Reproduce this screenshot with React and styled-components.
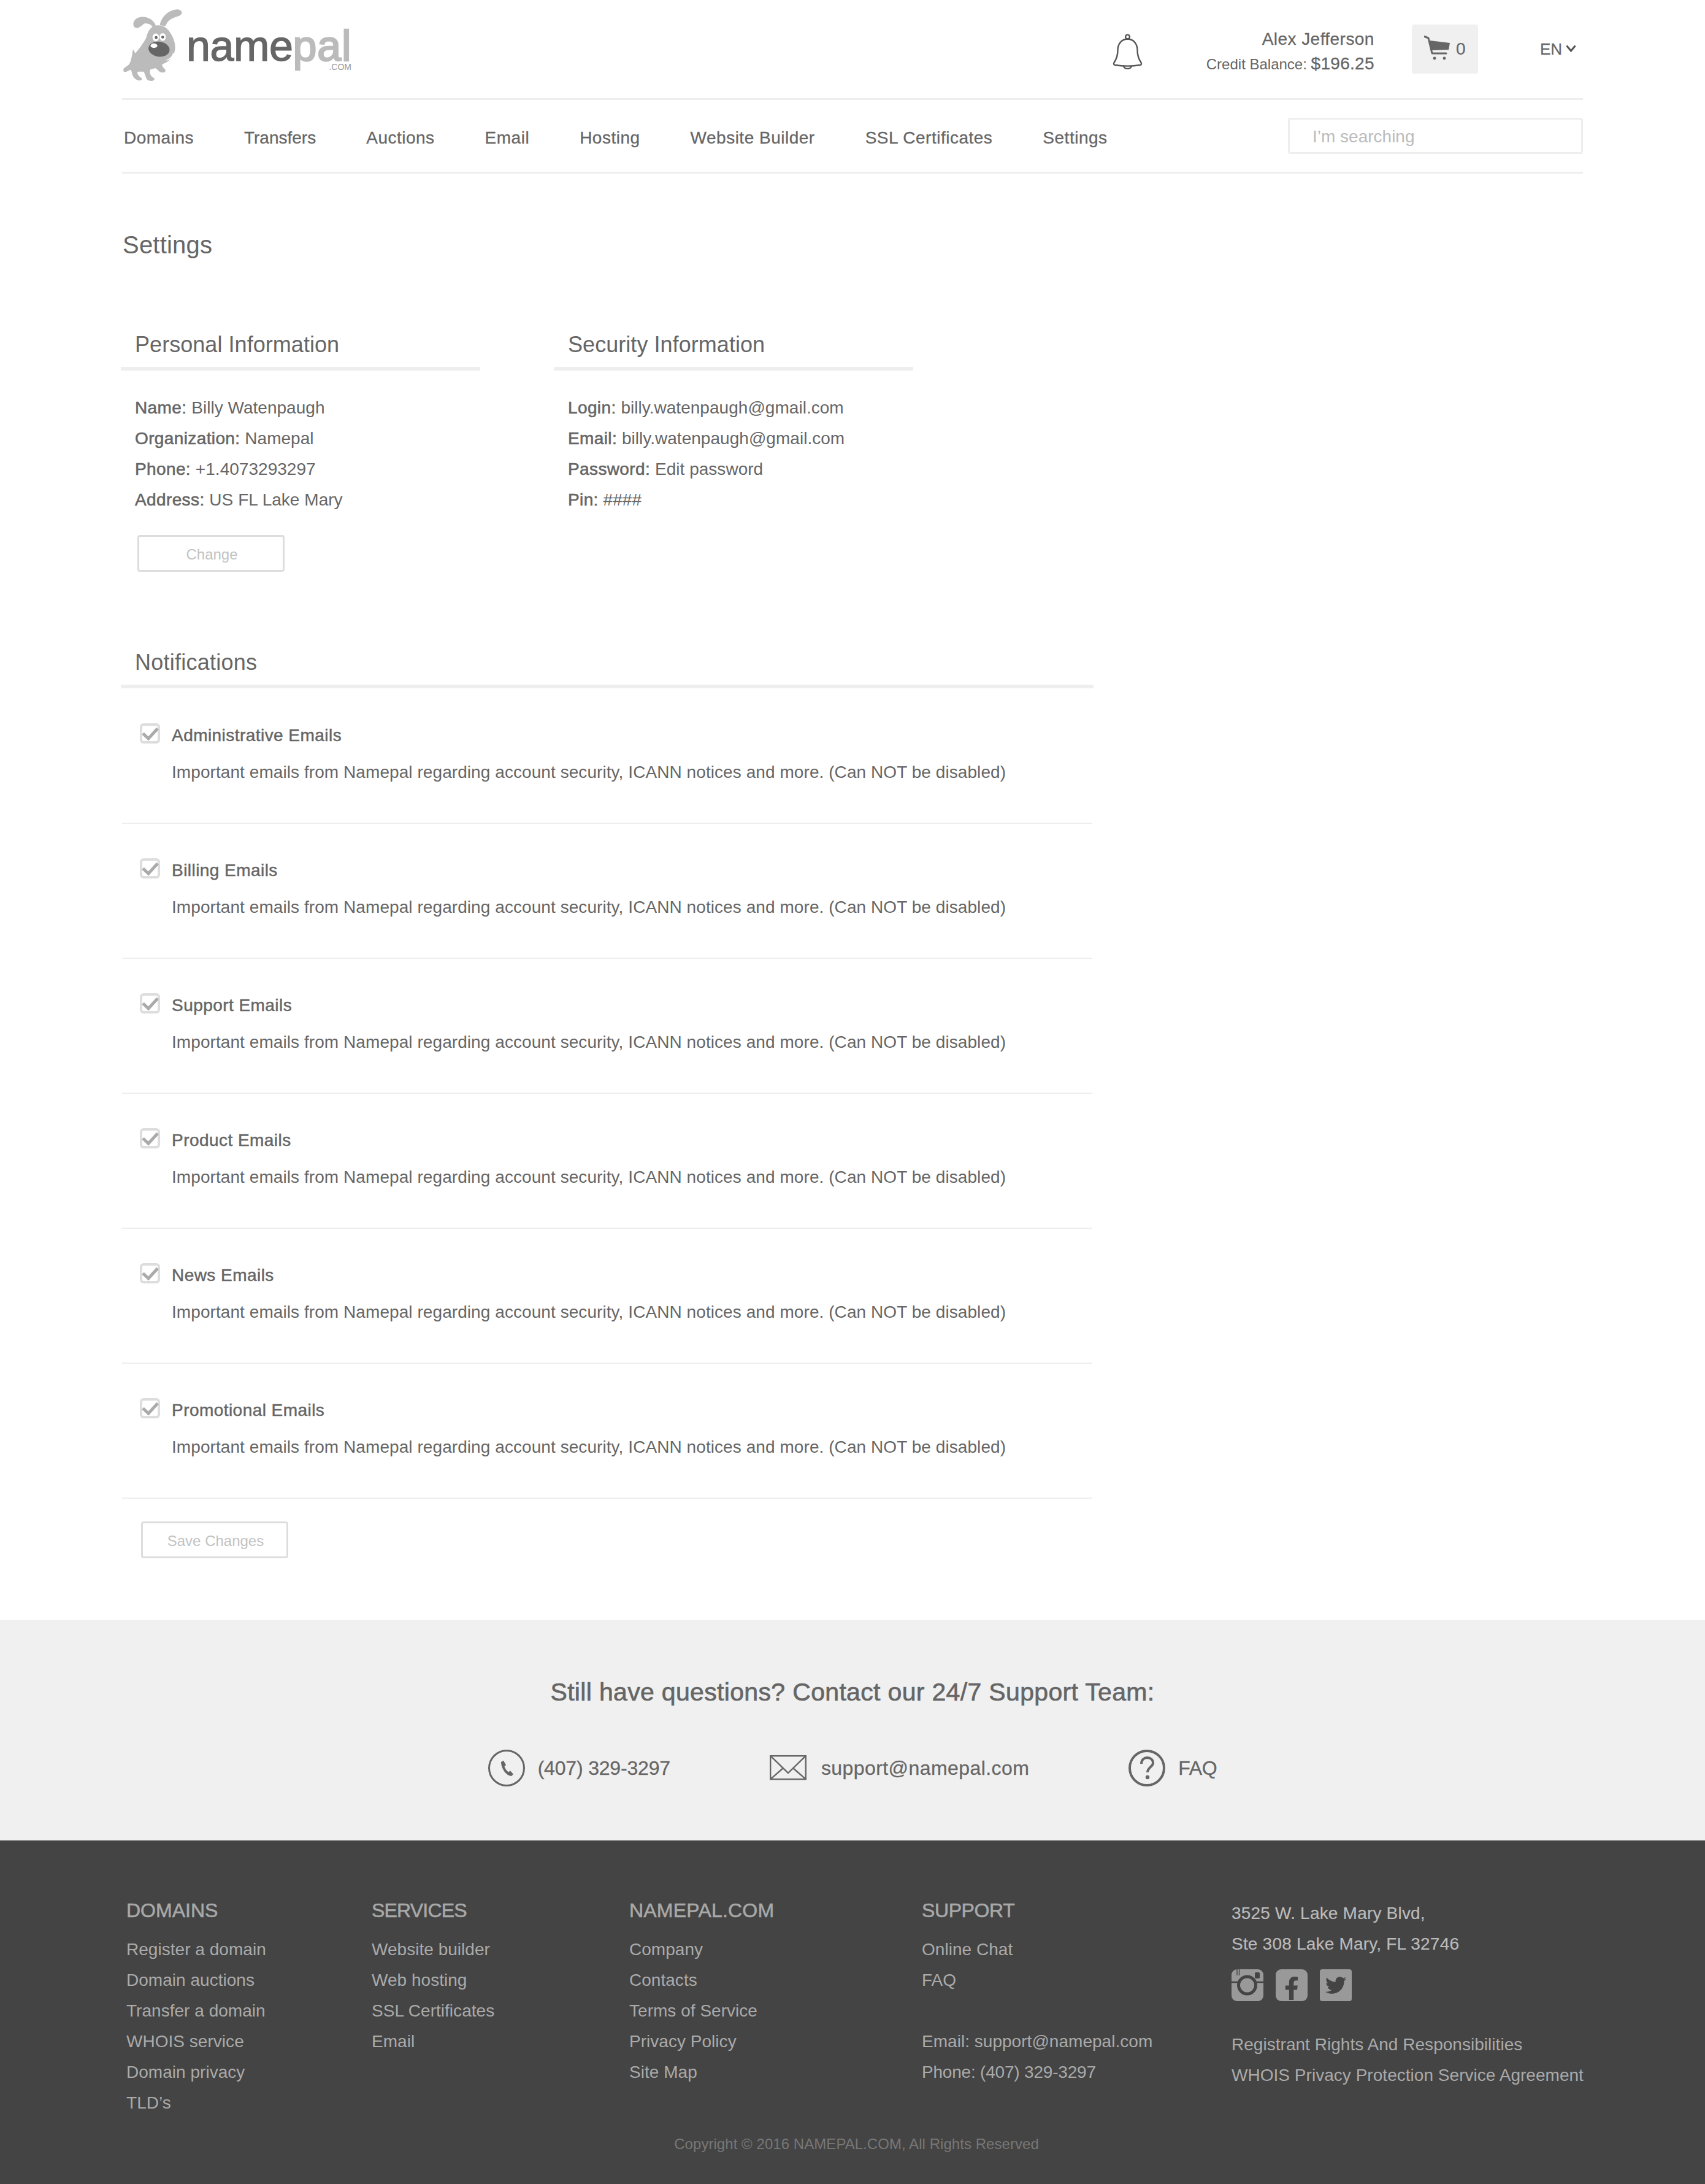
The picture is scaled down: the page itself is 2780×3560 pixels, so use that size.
import React from 'react';
import styled, { createGlobalStyle } from 'styled-components';
import { FaFacebookF, FaTwitter } from 'react-icons/fa';

const Global = createGlobalStyle`
  html, body { margin: 0; padding: 0; background: #fff; }
  body { font-family: "Liberation Sans", Arial, sans-serif; color: #666; }
  * { box-sizing: border-box; }
`;

const Page = styled.div`width: 2780px; height: 3560px; overflow: hidden;`;
const Container = styled.div`margin-left: 199px; width: 2382px;`;

const Header = styled.header`
  height: 163px; border-bottom: 3px solid #eee; display: flex; align-items: flex-start; padding-right: 11px;
`;
const Logo = styled.div`display: flex; align-items: flex-start; position: relative; width: 373px; margin-left: 1px; margin-top: 12px; margin-right: auto;`;
const DogMark = styled.svg`width: 100px; height: 123px; flex: none;`;
const LogoWord = styled.div`
  font-size: 70px; line-height: 56px; margin: 35px 0 0 4px; color: #666; -webkit-text-stroke: 1.4px currentColor; letter-spacing: -0.4px;
  span { color: #bbb; letter-spacing: 0.8px; -webkit-text-stroke-width: 2.4px; }
`;
const LogoCom = styled.small`position: absolute; right: 0; top: 91px; font-size: 14px; line-height: 12px; color: #999; letter-spacing: 0;`;
const BellWrap = styled.svg`width: 49px; height: 58px; margin-top: 55px; margin-right: 104px; flex: none;`;
const User = styled.div`display: flex; flex-direction: column; align-items: flex-end; margin-top: 44px; margin-right: 61px;`;
const UserName = styled.div`font-size: 28px; line-height: 40px; letter-spacing: 0.45px; -webkit-text-stroke: 0.3px currentColor;`;
const Balance = styled.div`font-size: 24px; line-height: 39px; b { font-size: 28px; font-weight: 400; letter-spacing: 0.3px; -webkit-text-stroke: 0.3px currentColor; }`;
const Cart = styled.div`
  width: 108px; height: 80px; margin-top: 40px; margin-right: 101px; background: #f0f0f0; border-radius: 4px; display: flex; align-items: center;
  padding-left: 20px; gap: 10px; font-size: 28px; -webkit-text-stroke: 0.2px currentColor;
`;
const CartIcon = styled.svg`width: 42px; height: 40px; flex: none; margin-top: -4px;`;
const Lang = styled.div`display: flex; align-items: center; gap: 6px; margin-top: 60px; font-size: 26px; line-height: 40px; -webkit-text-stroke: 0.3px currentColor;`;
const Chevron = styled.svg`width: 17px; height: 12px; margin-top: -3px;`;

const NavBar = styled.nav`height: 120px; border-bottom: 3px solid #eee; display: flex; justify-content: space-between; padding-top: 29px;`;
const NavList = styled.div`display: flex; gap: 82px; padding: 13px 0 0 3px;`;
const NavItem = styled.a`font-size: 28px; line-height: 40px; color: #666; letter-spacing: ${p => p.$ls}px; -webkit-text-stroke: 0.3px currentColor;`;
const Search = styled.input`
  width: 481px; height: 59px; border: 3px solid #eee; border-radius: 4px; padding: 2px 0 0 37px; font: 28px "Liberation Sans", Arial, sans-serif; outline: none;
  &::placeholder { color: #bbb; opacity: 1; }
`;

const Title = styled.h1`font-size: 40px; line-height: 50px; font-weight: 400; margin: 91px 0 0; padding-left: 1px; color: #666; letter-spacing: 0.2px;`;
const InfoGrid = styled.div`display: flex; gap: 120px; margin: 116px 0 0 -2px;`;
const Panel = styled.section`width: ${p => p.$w}px;`;
const PanelTitle = styled.h2`
  font-size: 36px; line-height: 44px; font-weight: 400; margin: 0; padding: 0 0 14px 23px; height: 64px; border-bottom: 6px solid #eee; color: #666; letter-spacing: ${p => p.$ls ?? 0.05}px;
`;
const InfoList = styled.div`margin-top: 36px; padding-left: 23px;`;
const InfoRow = styled.div`font-size: 28px; line-height: 50px; letter-spacing: 0.03px; b { font-weight: 400; letter-spacing: 0.38px; -webkit-text-stroke: 0.6px currentColor; }`;
const GhostButton = styled.button`
  display: block; width: 240px; height: 60px; margin: ${p => p.$m}; background: #fff; border: 3px solid #ddd; border-radius: 4px;
  font: 24px "Liberation Sans", Arial, sans-serif; color: #c2c2c2; padding: 4px 0 0 3px;
`;
const Notifications = styled.section`width: 1586px; margin: 126px 0 0 -2px;`;
const NotifyList = styled.div`padding: 1px 0 0 2px; width: 1584px;`;
const NotifyRow = styled.div`
  height: 220px; border-bottom: 2px solid #eee; padding: 56px 0 0 29px; display: grid; grid-template-columns: 52px 1fr; grid-template-rows: 40px 40px; row-gap: 20px;
`;
const CheckBox = styled.svg`width: 33px; height: 33px; margin-top: 0;`;
const NotifyName = styled.div`font-size: 28px; line-height: 40px; letter-spacing: 0.45px; -webkit-text-stroke: 0.5px currentColor;`;
const NotifyText = styled.div`grid-column: 2; font-size: 28px; line-height: 40px; letter-spacing: 0.07px; white-space: nowrap;`;

const Band = styled.section`height: 359px; margin-top: 101px; background: #f0f0f0; padding-top: 92px; text-align: center;`;
const BandTitle = styled.h3`font-size: 41px; line-height: 50px; font-weight: 400; margin: 0; -webkit-text-stroke: 0.7px currentColor; letter-spacing: 0.33px;`;
const ContactRow = styled.div`display: flex; justify-content: center; gap: 162px; margin-top: 69px;`;
const Contact = styled.div`display: flex; align-items: center; gap: ${p => p.$gap}px; height: 60px; font-size: 32px; line-height: 40px; -webkit-text-stroke: 0.3px currentColor; letter-spacing: ${p => p.$ls}px;`;
const ContactIcon = styled.svg`width: 60px; height: 60px; flex: none;`;

const Footer = styled.footer`height: 560px; background: #444; padding: 93px 0 0 206px; color: #aaa;`;
const FooterGrid = styled.div`display: grid; grid-template-columns: 400px 420px 477px 505px 1fr; height: 358px;`;
const FooterCol = styled.div`font-size: 28px; line-height: 50px; padding-top: ${p => p.$pt || 0}px;`;
const FooterHead = styled.h4`font-size: 32px; line-height: 40px; font-weight: 400; margin: 1px 0 19px; color: #a8a8a8; -webkit-text-stroke: 0.6px currentColor; letter-spacing: ${p => p.$ls}px;`;
const FooterLink = styled.div`font-size: 28px; line-height: 50px; height: 50px; letter-spacing: ${p => p.$ls ?? 0.03}px; color: #aaa;`;
const Address = styled.div`color: #bbb; letter-spacing: 0.2px; -webkit-text-stroke: 0.2px currentColor;`;
const Social = styled.div`display: flex; gap: 20px; margin: 16px 0 46px;`;
const SocialBox = styled.div`width: 52px; height: 52px; background: #999; border-radius: ${p => p.$r}px; color: #444; display: flex; align-items: center; justify-content: center; font-size: ${p => p.$s}px; overflow: hidden;`;
const FacebookGlyph = styled(FaFacebookF)`margin-top: 9px;`;
const Copyright = styled.div`font-size: 24px; line-height: 30px; color: #777; text-align: center; margin: 29px 0 0 -206px; letter-spacing: 0.05px; padding-left: 13px;`;

const Dog = () => (
  <DogMark viewBox="30 20 300 370">
    <g fill="#bbb">
      <path d="M165 125 C185 100 235 100 260 140 C285 175 295 215 280 250 C268 280 245 290 225 298 C218 310 235 318 240 328 C240 342 215 345 205 330 L190 318 L165 325 C158 345 170 360 185 368 C190 382 165 385 150 375 C140 360 140 345 132 335 L105 335 C95 340 110 362 125 368 C125 382 105 382 90 370 C75 355 75 335 70 325 C55 330 45 340 35 335 C28 320 40 315 55 305 C70 295 75 260 80 225 L92 245 C110 225 135 190 145 170 C150 150 155 135 165 125 Z" />
      <path d="M212 108 C218 70 250 35 295 30 C320 30 328 50 310 60 C285 72 255 72 240 112 Z" />
      <path d="M192 108 C180 80 150 62 115 68 C90 72 75 95 85 115 C100 130 118 115 135 100 C155 95 170 105 178 118 Z" />
    </g>
    <ellipse cx="192" cy="167" rx="16" ry="19" fill="#fff" />
    <ellipse cx="226" cy="165" rx="15" ry="19" fill="#fff" />
    <circle cx="194" cy="168" r="7" fill="#666" />
    <circle cx="226" cy="166" r="7" fill="#666" />
    <ellipse cx="208" cy="225" rx="52" ry="37" transform="rotate(8 208 225)" fill="#666" />
    <ellipse cx="183" cy="208" rx="17" ry="11" fill="#fff" />
    <path d="M278 240 C272 262 258 274 240 278 C255 285 275 272 282 252 Z" fill="#fff" />
  </DogMark>
);

const Bell = () => (
  <BellWrap viewBox="0 0 49 58" fill="none" stroke="#555" strokeWidth="2.4" strokeLinejoin="round">
    <circle cx="24.5" cy="5" r="3.4" />
    <path d="M24.5 8.5 C14 9 8.5 17 8.5 27 C8.5 37 6 42 2.5 47 C1.5 49 2 50.5 4 51 C17 53 32 53 45 51 C47 50.5 47.5 49 46.5 47 C43 42 40.5 37 40.5 27 C40.5 17 35 9 24.5 8.5 Z" />
    <path d="M18 52.5 C19 56 22 57 24.5 57 C27 57 30 56 31 52.5" />
  </BellWrap>
);

const CartGlyph = () => (
  <CartIcon viewBox="0 0 42 40">
    <path d="M0.5 1.5 L7 4 L13 29 H36" fill="none" stroke="#666" strokeWidth="3" strokeLinecap="round" strokeLinejoin="round" />
    <path d="M9 8 L42 12 L40 23 L11.5 24 Z" fill="#666" />
    <circle cx="17" cy="37" r="2.4" fill="#666" />
    <circle cx="33" cy="37" r="2.4" fill="#666" />
  </CartIcon>
);

const Tick = () => (
  <CheckBox viewBox="0 0 33 33" fill="none">
    <rect x="2" y="2" width="29" height="29" rx="4" stroke="#ddd" strokeWidth="4" />
    <path d="M5 16.5 L14 25 L29 8.5" stroke="#aaa" strokeWidth="5" />
  </CheckBox>
);

const info1 = [['Name:', 'Billy Watenpaugh'], ['Organization:', 'Namepal'], ['Phone:', '+1.4073293297'], ['Address:', 'US FL Lake Mary']];
const info2 = [['Login:', 'billy.watenpaugh@gmail.com'], ['Email:', 'billy.watenpaugh@gmail.com'], ['Password:', 'Edit password'], ['Pin:', '####']];
const notifs = ['Administrative Emails', 'Billing Emails', 'Support Emails', 'Product Emails', 'News Emails', 'Promotional Emails'];
const nav = [['Domains', 0.5], ['Transfers', 0], ['Auctions', 0.5], ['Email', 0.5], ['Hosting', 0.5], ['Website Builder', 0.5], ['SSL Certificates', 0.5], ['Settings', 0.5]];
const cols = [
  ['DOMAINS', 0, ['Register a domain', 'Domain auctions', 'Transfer a domain', 'WHOIS service', 'Domain privacy', 'TLD’s']],
  ['SERVICES', -0.8, ['Website builder', 'Web hosting', 'SSL Certificates', 'Email']],
  ['NAMEPAL.COM', 0.2, ['Company', 'Contacts', 'Terms of Service', 'Privacy Policy', 'Site Map']],
  ['SUPPORT', -0.4, ['Online Chat', 'FAQ', '', 'Email: support@namepal.com', 'Phone: (407) 329-3297']],
];

export default function App() {
  return (
    <Page>
      <Global />
      <Container>
        <Header>
          <Logo>
            <Dog />
            <LogoWord>name<span>pal</span></LogoWord>
            <LogoCom>.COM</LogoCom>
          </Logo>
          <Bell />
          <User>
            <UserName>Alex Jefferson</UserName>
            <Balance>Credit Balance: <b>$196.25</b></Balance>
          </User>
          <Cart><CartGlyph />0</Cart>
          <Lang>EN<Chevron viewBox="0 0 17 12"><path d="M1.5 1.5 L8.5 10 L15.5 1.5" fill="none" stroke="#555" strokeWidth="3" /></Chevron></Lang>
        </Header>
        <NavBar>
          <NavList>{nav.map(([n, ls]) => <NavItem key={n} $ls={ls}>{n}</NavItem>)}</NavList>
          <Search placeholder="I’m searching" />
        </NavBar>
        <Title>Settings</Title>
        <InfoGrid>
          <Panel $w={586}>
            <PanelTitle>Personal Information</PanelTitle>
            <InfoList>{info1.map(([a, b]) => <InfoRow key={a}><b>{a}</b> {b}</InfoRow>)}</InfoList>
            <GhostButton $m="32px 0 0 27px">Change</GhostButton>
          </Panel>
          <Panel $w={586}>
            <PanelTitle>Security Information</PanelTitle>
            <InfoList>{info2.map(([a, b]) => <InfoRow key={a}><b>{a}</b> {b}</InfoRow>)}</InfoList>
          </Panel>
        </InfoGrid>
        <Notifications>
          <PanelTitle $ls={0.25}>Notifications</PanelTitle>
          <NotifyList>
            {notifs.map(n => (
              <NotifyRow key={n}>
                <Tick />
                <NotifyName>{n}</NotifyName>
                <NotifyText>Important emails from Namepal regarding account security, ICANN notices and more. (Can NOT be disabled)</NotifyText>
              </NotifyRow>
            ))}
          </NotifyList>
        </Notifications>
        <GhostButton $m="37px 0 0 31px">Save Changes</GhostButton>
      </Container>
      <Band>
        <BandTitle>Still have questions? Contact our 24/7 Support Team:</BandTitle>
        <ContactRow>
          <Contact $gap={21} $ls={-0.18}>
            <ContactIcon viewBox="0 0 60 60" fill="none">
              <circle cx="30" cy="30" r="28.5" stroke="#666" strokeWidth="3" />
              <path d="M21 20 L25 18 L29 25 L26.5 27.5 C27.5 31 30 34.5 33 36.5 L36 34.5 L41 40 L38 43 C30 43 21 31 21 20 Z" fill="#666" />
            </ContactIcon>
            (407) 329-3297
          </Contact>
          <Contact $gap={24} $ls={0.42}>
            <ContactIcon viewBox="0 0 60 60" fill="none" stroke="#666" strokeWidth="2.4">
              <rect x="1.2" y="10.2" width="57.6" height="38" />
              <path d="M1.2 10.2 L30 38 L58.8 10.2 M1.2 48.2 L22 30 M58.8 48.2 L38 30" />
            </ContactIcon>
            support@namepal.com
          </Contact>
          <Contact $gap={21} $ls={-0.3}>
            <ContactIcon viewBox="0 0 60 60" fill="none">
              <circle cx="30" cy="30" r="28" stroke="#666" strokeWidth="4" />
              <path d="M21 23 C21 16 26 13 30.5 13 C36 13 40 16.5 40 21.5 C40 28 31 29 31 37" stroke="#666" strokeWidth="4" />
              <circle cx="31" cy="45" r="3.2" fill="#666" />
            </ContactIcon>
            FAQ
          </Contact>
        </ContactRow>
      </Band>
      <Footer>
        <FooterGrid>
          {cols.map(([h, ls, items]) => (
            <FooterCol key={h}>
              <FooterHead $ls={ls}>{h}</FooterHead>
              {items.map((t, i) => <FooterLink key={i} $ls={t.startsWith('Phone') ? -0.2 : undefined}>{t}</FooterLink>)}
            </FooterCol>
          ))}
          <FooterCol $pt={1}>
            <Address>3525 W. Lake Mary Blvd,<br />Ste 308 Lake Mary, FL 32746</Address>
            <Social>
              <SocialBox $r={9}>
                <svg width="52" height="52" viewBox="0 0 52 52" fill="none">
                  <path d="M0 21 H14 M38 21 H52" stroke="#444" strokeWidth="2.5" />
                  <circle cx="25.5" cy="26" r="14" stroke="#444" strokeWidth="5" />
                  <rect x="38" y="5" width="8" height="10" rx="2" fill="#444" />
                  <path d="M9 0 V10 M12.5 0 V10" stroke="#444" strokeWidth="1.4" />
                </svg>
              </SocialBox>
              <SocialBox $r={9} $s={38}><FacebookGlyph /></SocialBox>
              <SocialBox $r={4} $s={34}><FaTwitter /></SocialBox>
            </Social>
            <FooterLink>Registrant Rights And Responsibilities</FooterLink>
            <FooterLink>WHOIS Privacy Protection Service Agreement</FooterLink>
          </FooterCol>
        </FooterGrid>
        <Copyright>Copyright © 2016 NAMEPAL.COM, All Rights Reserved</Copyright>
      </Footer>
    </Page>
  );
}
